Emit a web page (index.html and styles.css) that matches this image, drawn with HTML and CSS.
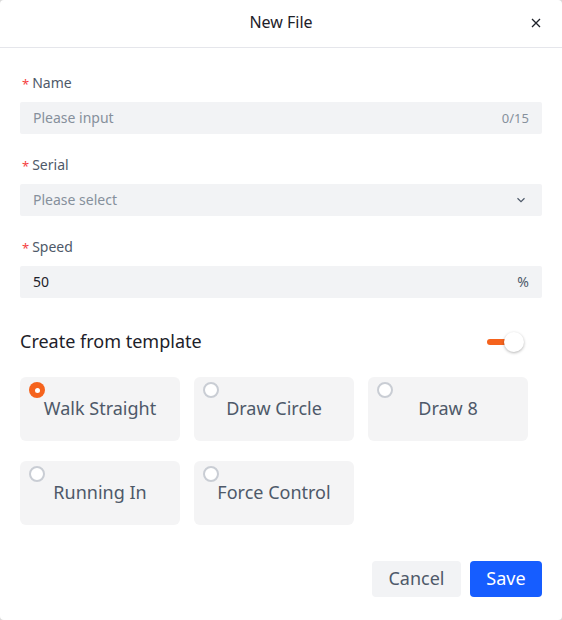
FILE: index.html
```html
<!DOCTYPE html>
<html lang="en">
<head>
<meta charset="utf-8">
<title>New File</title>
<link rel="stylesheet" href="styles.css">
</head>
<body>
<div class="dialog">
  <div class="header">
    <div class="title">New File</div>
    <span class="close">
      <svg width="10" height="10" viewBox="0 0 10 10"><path d="M1 1L9 9M9 1L1 9" stroke="#1d2129" stroke-width="1.3" fill="none"/></svg>
    </span>
  </div>
  <div class="body">
    <div class="form-item">
      <div class="label"><span class="req">*</span>Name</div>
      <div class="input"><span class="placeholder">Please input</span><span class="suffix">0/15</span></div>
    </div>
    <div class="form-item">
      <div class="label"><span class="req">*</span>Serial</div>
      <div class="input"><span class="placeholder">Please select</span>
        <svg class="chev" width="10" height="6" viewBox="0 0 10 6"><path d="M1.5 1.2L5 4.6L8.5 1.2" stroke="#4e5969" stroke-width="1.2" fill="none"/></svg>
      </div>
    </div>
    <div class="form-item">
      <div class="label"><span class="req">*</span>Speed</div>
      <div class="input"><span class="value">50</span><span class="suffix dark">%</span></div>
    </div>
    <div class="template-row">
      <div class="template-title">Create from template</div>
      <div class="switch"><span class="track"></span><span class="knob"></span></div>
    </div>
    <div class="cards">
      <div class="card"><span class="radio checked"></span><span class="card-text">Walk Straight</span></div>
      <div class="card"><span class="radio"></span><span class="card-text">Draw Circle</span></div>
      <div class="card"><span class="radio"></span><span class="card-text">Draw 8</span></div>
      <div class="card"><span class="radio"></span><span class="card-text">Running In</span></div>
      <div class="card"><span class="radio"></span><span class="card-text">Force Control</span></div>
    </div>
    <div class="footer">
      <button class="btn cancel">Cancel</button>
      <button class="btn save">Save</button>
    </div>
  </div>
</div>
</body>
</html>
```
FILE: styles.css
```css
* { box-sizing: border-box; }
html, body { margin: 0; padding: 0; }
body {
  background: #d9d9d9;
  font-family: "Noto Sans", "Liberation Sans", Arial, sans-serif;
  width: 562px;
  height: 620px;
}
.dialog {
  width: 562px;
  height: 620px;
  background: #fff;
  border-radius: 4px;
  overflow: hidden;
}
.header {
  height: 48px;
  border-bottom: 1px solid #e5e6eb;
  display: flex;
  align-items: center;
  justify-content: center;
  position: relative;
}
.title {
  font-size: 16px;
  line-height: 24px;
  color: #1d2129;
  padding-bottom: 3px;
}
.close {
  position: absolute;
  right: 21px;
  top: 18px;
  width: 10px;
  height: 10px;
  display: flex;
}
.body {
  padding: 24px 20px 0 20px;
}
.form-item {
  margin-bottom: 20px;
}
.label {
  font-size: 14px;
  line-height: 22px;
  color: #4e5969;
  margin-bottom: 8px;
  display: flex;
  align-items: center;
}
.req {
  color: #f53f3f;
  font-size: 13px;
  margin-left: 2px;
  margin-right: 3px;
  position: relative;
  top: 1px;
}
.input {
  height: 32px;
  background: #f2f3f5;
  border-radius: 2px;
  display: flex;
  align-items: center;
  justify-content: space-between;
  padding: 0 13px 0 13px;
  font-size: 14px;
  line-height: 20px;
}
.placeholder { color: #86909c; }
.value { color: #1d2129; }
.suffix {
  color: #86909c;
  font-size: 13px;
}
.suffix.dark { color: #4e5969; font-size: 14px; }
.chev { margin-right: 3px; }
.template-row {
  margin-top: 32px;
  height: 24px;
  display: flex;
  align-items: center;
  justify-content: space-between;
}
.template-title {
  font-size: 18px;
  line-height: 24px;
  color: #1d2129;
  padding-bottom: 2px;
}
.switch {
  position: relative;
  width: 37px;
  height: 20px;
  margin-right: 18px;
}
.track {
  position: absolute;
  left: 0;
  top: 7px;
  width: 20px;
  height: 6px;
  border-radius: 3px;
  background: #f5631d;
}
.knob {
  position: absolute;
  left: 17px;
  top: 0;
  width: 20px;
  height: 20px;
  border-radius: 50%;
  background: #fff;
  box-shadow: 0 1px 3px rgba(0, 0, 0, 0.3);
}
.cards {
  margin-top: 23px;
  display: grid;
  grid-template-columns: repeat(3, 160px);
  column-gap: 14px;
  row-gap: 20px;
}
.card {
  position: relative;
  height: 64px;
  background: #f4f4f5;
  border-radius: 6px;
  display: flex;
  align-items: center;
  justify-content: center;
}
.card-text {
  font-size: 18px;
  line-height: 24px;
  color: #4e5969;
  padding-bottom: 3px;
}
.radio {
  position: absolute;
  left: 9px;
  top: 5px;
  width: 16px;
  height: 16px;
  border-radius: 50%;
  border: 2px solid #c9cdd4;
  background: #fff;
}
.radio.checked {
  border: none;
  background: #f5631d;
}
.radio.checked::after {
  content: "";
  position: absolute;
  left: 5.5px;
  top: 5.5px;
  width: 5px;
  height: 5px;
  border-radius: 50%;
  background: #fff;
}
.footer {
  margin-top: 36px;
  display: flex;
  justify-content: flex-end;
  gap: 9px;
}
.btn {
  height: 36px;
  border: none;
  border-radius: 4px;
  font-family: "Noto Sans", "Liberation Sans", Arial, sans-serif;
  font-size: 18px;
  line-height: 24px;
  padding: 0 0 2px 0;
  cursor: pointer;
}
.cancel {
  width: 89px;
  background: #f2f3f5;
  color: #4e5969;
}
.save {
  width: 72px;
  background: #165dff;
  color: #fff;
}
```
